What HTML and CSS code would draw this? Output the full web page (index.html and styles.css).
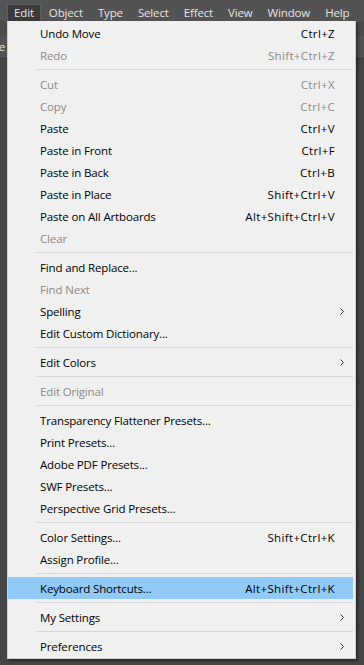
FILE: index.html
```html
<!DOCTYPE html>
<html lang="en">
<head>
  <meta charset="UTF-8">
  <title>Edit menu</title>
  <link rel="stylesheet" href="styles.css">
</head>
<body>
  <!-- Pasek menu aplikacji -->
  <div class="menubar">
    <span class="menubar-item open">Edit</span>
    <span class="menubar-item">Object</span>
    <span class="menubar-item">Type</span>
    <span class="menubar-item">Select</span>
    <span class="menubar-item">Effect</span>
    <span class="menubar-item">View</span>
    <span class="menubar-item">Window</span>
    <span class="menubar-item">Help</span>
  </div>

  <!-- Obszar roboczy pod menu -->
  <div class="workspace">
    <div class="controlbar"><span class="cut-label">le</span></div>

    <!-- Rozwinięte menu Edit -->
    <div class="dropdown">
      <div class="item"><span>Undo Move</span><span class="key">Ctrl+Z</span></div>
      <div class="item disabled"><span>Redo</span><span class="key">Shift+Ctrl+Z</span></div>
      <div class="sep"></div>
      <div class="item disabled"><span>Cut</span><span class="key">Ctrl+X</span></div>
      <div class="item disabled"><span>Copy</span><span class="key">Ctrl+C</span></div>
      <div class="item"><span>Paste</span><span class="key">Ctrl+V</span></div>
      <div class="item"><span>Paste in Front</span><span class="key">Ctrl+F</span></div>
      <div class="item"><span>Paste in Back</span><span class="key">Ctrl+B</span></div>
      <div class="item"><span>Paste in Place</span><span class="key">Shift+Ctrl+V</span></div>
      <div class="item"><span>Paste on All Artboards</span><span class="key">Alt+Shift+Ctrl+V</span></div>
      <div class="item disabled"><span>Clear</span></div>
      <div class="sep"></div>
      <div class="item"><span>Find and Replace...</span></div>
      <div class="item disabled"><span>Find Next</span></div>
      <div class="item"><span>Spelling</span><span class="key"></span><svg class="arrow" viewBox="0 0 4 7"><path d="M0.5 0.5 L3.5 3.5 L0.5 6.5" /></svg></div>
      <div class="item"><span>Edit Custom Dictionary...</span></div>
      <div class="sep"></div>
      <div class="item"><span>Edit Colors</span><span class="key"></span><svg class="arrow" viewBox="0 0 4 7"><path d="M0.5 0.5 L3.5 3.5 L0.5 6.5" /></svg></div>
      <div class="sep"></div>
      <div class="item disabled"><span>Edit Original</span></div>
      <div class="sep"></div>
      <div class="item"><span>Transparency Flattener Presets...</span></div>
      <div class="item"><span>Print Presets...</span></div>
      <div class="item"><span>Adobe PDF Presets...</span></div>
      <div class="item"><span>SWF Presets...</span></div>
      <div class="item"><span>Perspective Grid Presets...</span></div>
      <div class="sep"></div>
      <div class="item"><span>Color Settings...</span><span class="key">Shift+Ctrl+K</span></div>
      <div class="item"><span>Assign Profile...</span></div>
      <div class="sep"></div>
      <div class="item active"><span>Keyboard Shortcuts...</span><span class="key">Alt+Shift+Ctrl+K</span></div>
      <div class="sep"></div>
      <div class="item"><span>My Settings</span><span class="key"></span><svg class="arrow" viewBox="0 0 4 7"><path d="M0.5 0.5 L3.5 3.5 L0.5 6.5" /></svg></div>
      <div class="sep"></div>
      <div class="item"><span>Preferences</span><span class="key"></span><svg class="arrow" viewBox="0 0 4 7"><path d="M0.5 0.5 L3.5 3.5 L0.5 6.5" /></svg></div>
    </div>
  </div>
</body>
</html>
```

FILE: styles.css
```css
body {
  margin: 0;
  background-color: #464646;
  font-family: 'Open Sans', 'Noto Sans', sans-serif;
  font-size: 11.5px;
  letter-spacing: -0.15px;
  height: 665px;
  overflow: hidden;
}

/* Pasek menu */
.menubar {
  display: flex;
  align-items: flex-end;
  height: 21px;
  padding-left: 7px;
  gap: 1px;
  background-color: #535353;
  color: #e4e4e4;
  font-size: 11.5px;
  letter-spacing: -0.15px;
}
.menubar-item {
  padding: 0 6px;
  height: 17px;
  line-height: 15px;
  box-sizing: border-box;
  border: 1px solid transparent;
  border-bottom: none;
}
.menubar-item.open {
  background-color: #3b3b3b;
  border-color: #5e5e5e;
}

/* Obszar roboczy */
.workspace {
  position: relative;
  height: 644px;
}
.controlbar {
  height: 38px;
  background-color: #535353;
  border-top: 15px solid #4d4d4d;
  box-sizing: border-box;
  color: #e6e6e6;
  line-height: 22px;
  border-bottom: 1px solid #3a3a3a;
  overflow: hidden;
}
.cut-label {
  margin-left: -4px;
}

/* Rozwinięte menu */
.dropdown {
  position: absolute;
  top: 0;
  left: 7px;
  width: 349px;
  box-sizing: border-box;
  padding: 1px 2px 1px 0;
  background-color: #f0f0f0;
  border: 1px solid #cfcfcf;
  border-top: none;
  box-shadow: 2px 2px 3px rgba(0, 0, 0, 0.45);
}
.item {
  display: grid;
  grid-template-columns: 1fr auto 18px;
  align-items: center;
  height: 22px;
  padding-left: 32px;
  color: #000;
  white-space: nowrap;
}
.item.disabled { color: #8a8a8a; }
.item.active { background-color: #91c9f7; }
.key {
  text-align: right;
  letter-spacing: 0.35px;
}
.arrow {
  width: 4px;
  height: 7px;
  margin-left: 5px;
  fill: none;
  stroke: #333;
  stroke-width: 1;
}
.sep {
  height: 1px;
  margin: 3px 0 3px 28px;
  background-color: #d7d7d7;
}
```
